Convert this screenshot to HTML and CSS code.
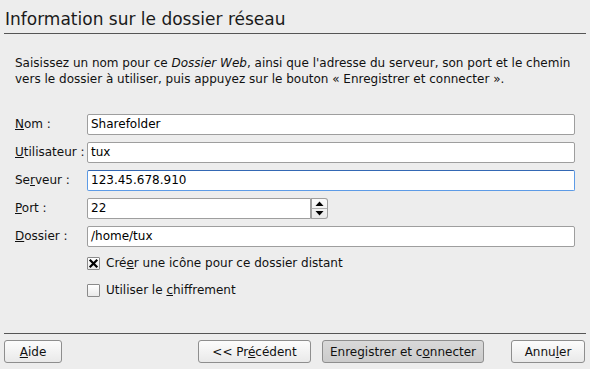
FILE: index.html
```html
<!DOCTYPE html>
<html lang="fr">
<head>
<meta charset="utf-8">
<title>Information sur le dossier réseau</title>
<link rel="stylesheet" href="styles.css">
</head>
<body>
<div class="page">
  <div class="header">
    <h1 class="title">Information sur le dossier réseau</h1>
  </div>
  <p class="intro">Saisissez un nom pour ce <em>Dossier Web</em>, ainsi que l'adresse du serveur, son port et le chemin vers le dossier à utiliser, puis appuyez sur le bouton « Enregistrer et connecter ».</p>
  <div class="form">
    <label class="lbl"><u>N</u>om :</label>
    <div class="field"><span class="val">Sharefolder</span></div>
    <label class="lbl"><u>U</u>tilisateur :</label>
    <div class="field"><span class="val">tux</span></div>
    <label class="lbl">Se<u>r</u>veur :</label>
    <div class="field focus"><span class="val">123.45.678.910</span></div>
    <label class="lbl"><u>P</u>ort :</label>
    <div class="spinrow">
      <div class="field port"><span class="val">22</span></div>
      <div class="spin">
        <div class="spinbtn up"><svg width="9" height="5" viewBox="0 0 9 5"><polygon points="0.5,5 4.5,0.5 8.5,5" fill="#000"/></svg></div>
        <div class="spinbtn down"><svg width="9" height="5" viewBox="0 0 9 5"><polygon points="0.5,0 4.5,4.5 8.5,0" fill="#000"/></svg></div>
      </div>
    </div>
    <label class="lbl"><u>D</u>ossier :</label>
    <div class="field"><span class="val">/home/tux</span></div>
  </div>
  <div class="checks">
    <div class="check">
      <span class="box"><svg width="11" height="11" viewBox="0 0 11 11"><path d="M2.5 2.5 L8.5 8.5 M8.5 2.5 L2.5 8.5" stroke="#000" stroke-width="2.2" stroke-linecap="square"/></svg></span>
      <span>Cré<u>e</u>r une icône pour ce dossier distant</span>
    </div>
    <div class="check">
      <span class="box"></span>
      <span>Utiliser le <u>c</u>hiffrement</span>
    </div>
  </div>
  <div class="spacer"></div>
  <div class="footer">
    <button class="btn b-aide"><u>A</u>ide</button>
    <button class="btn b-prec">&lt;&lt; Pr<u>é</u>cédent</button>
    <button class="btn default b-save">Enregistrer et c<u>o</u>nnecter</button>
    <button class="btn b-cancel">Annu<u>l</u>er</button>
  </div>
</div>
</body>
</html>
```
FILE: styles.css
```css
html, body {
  margin: 0;
  padding: 0;
  background: #ededed;
}
body {
  font-family: "DejaVu Sans", "Liberation Sans", sans-serif;
  font-size: 12px;
  color: #111;
}
.page {
  height: 369px;
  display: flex;
  flex-direction: column;
}
.header {
  margin: 0 4px;
  border-bottom: 1px solid #555;
  padding: 8px 0 3px 1px;
}
.title {
  margin: 0;
  font-size: 17px;
  font-weight: normal;
  line-height: 22px;
  color: #1a1a1a;
}
.intro {
  margin: 21px 10px 0 15px;
  line-height: 16px;
}
.form {
  margin-top: 27px;
  display: grid;
  grid-template-columns: 72px 488px;
  row-gap: 7px;
  padding-left: 15px;
}
.lbl {
  height: 21px;
  line-height: 21px;
  white-space: nowrap;
}
.field {
  box-sizing: border-box;
  height: 21px;
  background: #fff;
  border: 1px solid #9e9e9e;
  border-radius: 2px;
  padding: 0 3px;
  line-height: 19px;
  font-size: 12px;
  color: #000;
}
.field.focus {
  border-color: #5d9be6;
  border-top-color: #3468b4;
}
.spinrow {
  display: flex;
  align-items: stretch;
}
.field.port {
  width: 224px;
  border-radius: 2px 0 0 2px;
}
.spin {
  width: 17px;
  height: 21px;
  box-sizing: border-box;
  border: 1px solid #9e9e9e;
  border-left: none;
  border-radius: 0 3px 3px 0;
  display: flex;
  flex-direction: column;
  background: linear-gradient(#fbfbfb, #e8e8e8);
}
.spinbtn {
  flex: 1;
  display: flex;
  align-items: center;
  justify-content: center;
  border-left: 1px solid #9e9e9e;
}
.spinbtn.up {
  border-bottom: 1px solid #b0b0b0;
}
.checks {
  margin-top: 10px;
  padding-left: 87px;
  display: flex;
  flex-direction: column;
  gap: 14px;
}
.check {
  display: flex;
  align-items: center;
  gap: 6px;
  height: 13px;
  line-height: 13px;
}
.box {
  box-sizing: border-box;
  width: 13px;
  height: 13px;
  border: 1px solid #8a8a8a;
  border-radius: 1px;
  background: linear-gradient(#ffffff, #e9e9e9);
  display: flex;
  align-items: center;
  justify-content: center;
}
.spacer {
  flex: 1;
}
.footer {
  margin: 0 4px;
  border-top: 1px solid #555;
  padding: 6px 1px 6px 0;
  display: flex;
  align-items: center;
}
.btn {
  box-sizing: border-box;
  height: 23px;
  font-family: "DejaVu Sans", "Liberation Sans", sans-serif;
  font-size: 12px;
  color: #111;
  background: linear-gradient(#fcfcfc, #e9e9e9);
  border: 1px solid #8e8e8e;
  border-radius: 3px;
  padding: 0;
  text-align: center;
}
.btn.default {
  background: linear-gradient(#d9d9d9, #cbcbcb);
}
.b-aide { width: 58px; }
.b-prec { width: 113px; margin-left: 136px; }
.b-save { width: 162px; margin-left: 11px; }
.b-cancel { width: 74px; margin-left: 27px; }
```
